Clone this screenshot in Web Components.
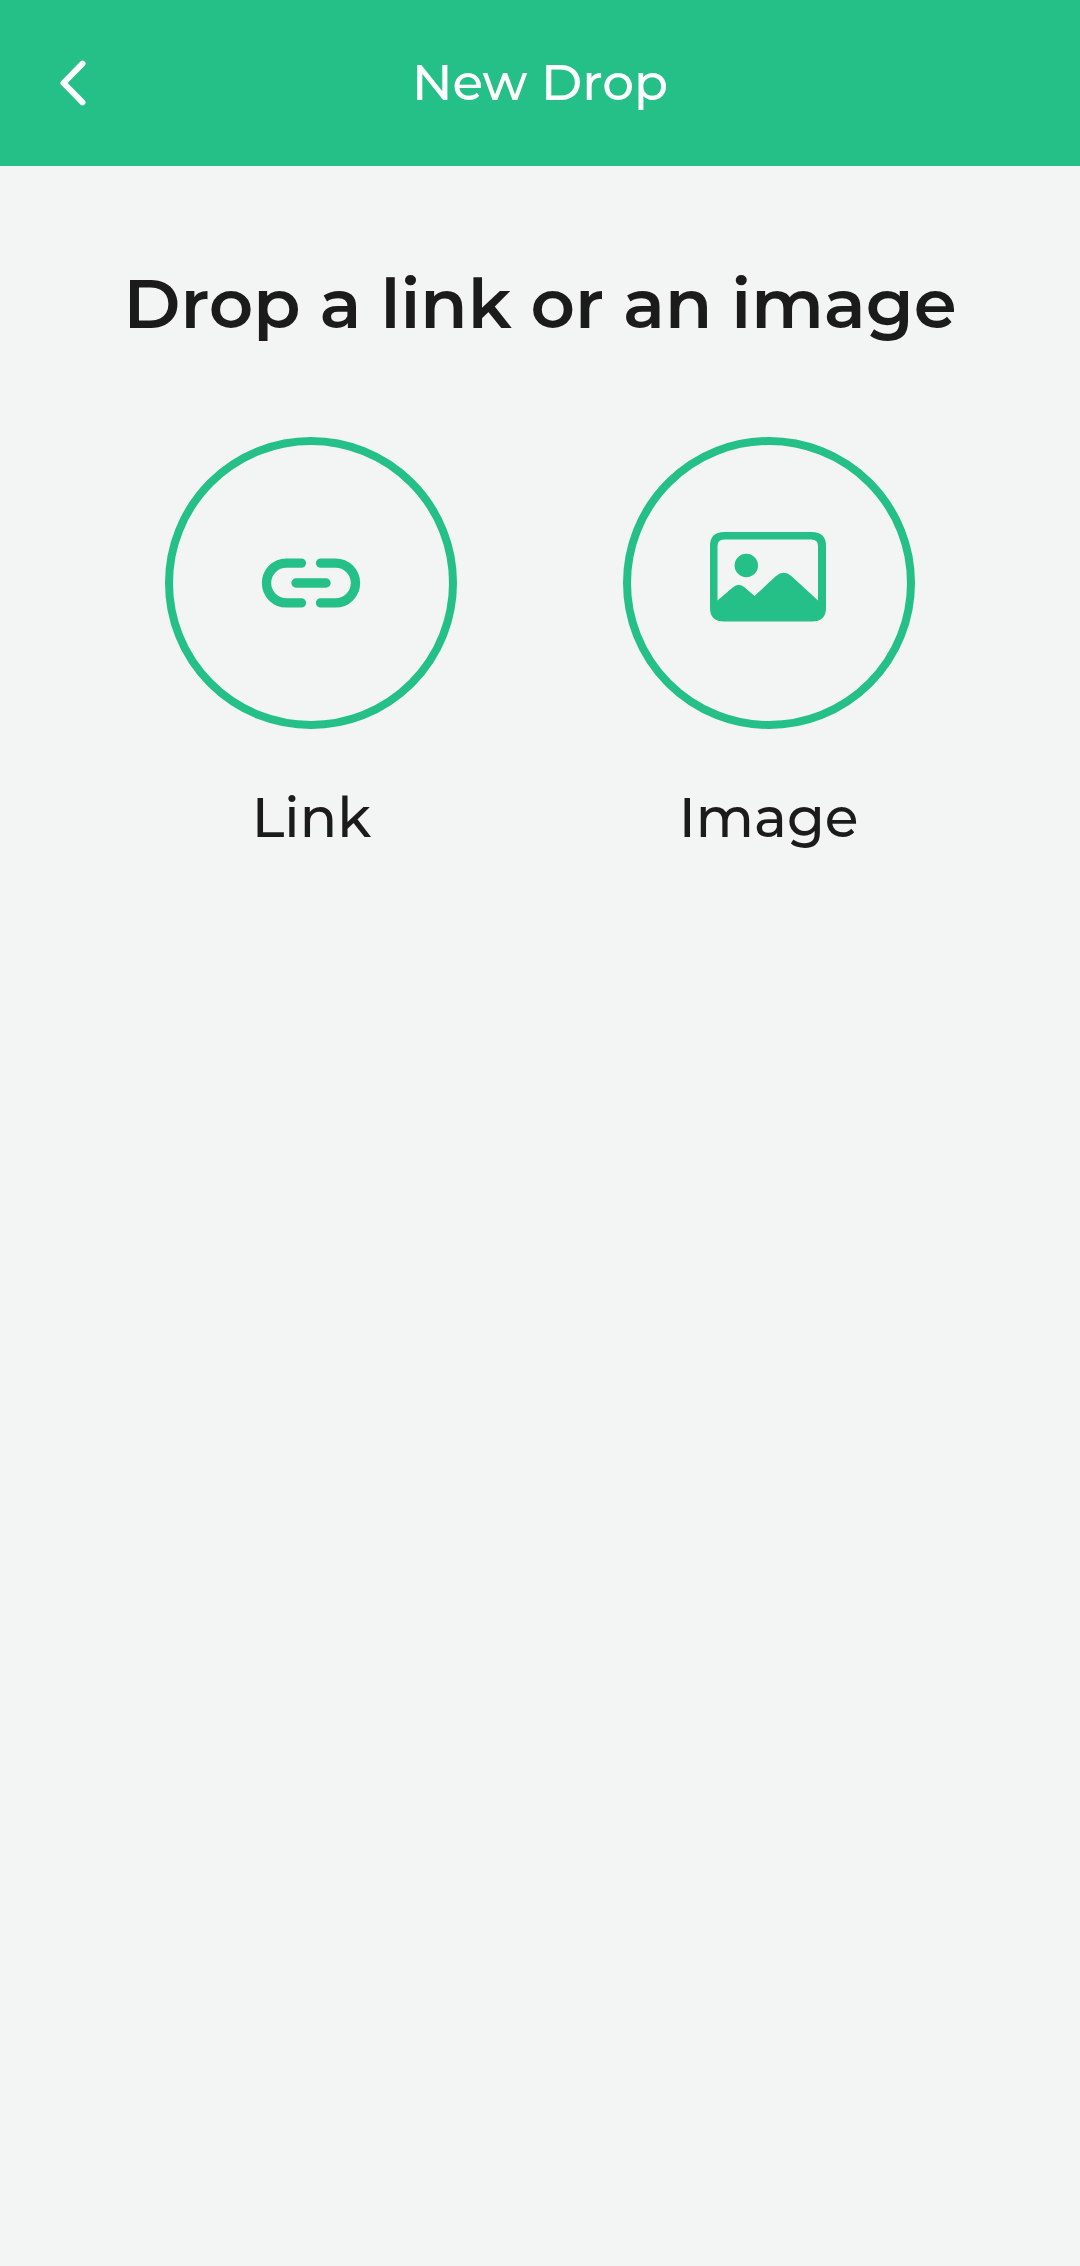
<!DOCTYPE html>
<html lang="en">
<head>
<meta charset="utf-8">
<meta name="viewport" content="width=device-width, initial-scale=1">
<title>New Drop</title>
<style>
  html { --green: #24c087; --ink: #1b1b1b; --paper: #f3f5f4; background: var(--paper); }
  body { margin: 0; color: var(--ink); font-family: Montserrat, Inter, sans-serif; }
</style>
</head>
<body>
<drop-page>
  <drop-header slot="header">New Drop</drop-header>
  <span slot="title">Drop a link or an image</span>
  <drop-option>
    <link-icon slot="icon"></link-icon>
    Link
  </drop-option>
  <drop-option>
    <image-icon slot="icon"></image-icon>
    Image
  </drop-option>
</drop-page>
<script>
  const define = (name, markup) => {
    const template = document.createElement('template');
    template.innerHTML = markup;
    customElements.define(name, class extends HTMLElement {
      constructor() {
        super();
        this.attachShadow({ mode: 'open' }).append(template.content.cloneNode(true));
      }
    });
  };

  define('drop-page', `
    <style>
      :host { display: flex; flex-direction: column; min-height: 100vh; background: var(--paper); }
      main { display: flex; flex-direction: column; gap: 88px; padding-top: 91px; }
      h1 { margin: 0; font-size: 69px; line-height: 92px; font-weight: 600; text-align: center; }
      .options { display: flex; justify-content: space-evenly; }
    </style>
    <slot name="header"></slot>
    <main>
      <h1><slot name="title"></slot></h1>
      <div class="options"><slot></slot></div>
    </main>`);

  define('drop-header', `
    <style>
      :host { display: block; background: var(--green); color: #fff; }
      header { display: grid; grid-template-columns: 1fr auto 1fr; align-items: center; height: 166px; padding: 0 48px; }
      button { display: flex; width: 48px; height: 72px; padding: 0; border: 0; background: none; color: inherit; align-items: center; justify-content: center; cursor: pointer; }
      h2 { margin: 0; font-size: 50px; line-height: 64px; font-weight: 500; }
    </style>
    <header>
      <button type="button" aria-label="Back">
        <svg width="48" height="48" viewBox="0 0 48 48" fill="none" stroke="currentColor" stroke-width="6" stroke-linecap="round" stroke-linejoin="round" aria-hidden="true"><path d="M34.5 4.7 15.500 24 34.500 43.300"/></svg>
      </button>
      <h2><slot></slot></h2>
    </header>`);

  define('drop-option', `
    <style>
      :host { display: block; }
      button { display: flex; flex-direction: column; align-items: center; gap: 53px; padding: 0; border: 0; background: none; color: inherit; font: inherit; font-size: 55px; line-height: 72px; font-weight: 500; cursor: pointer; }
      .ring { display: flex; align-items: center; justify-content: center; box-sizing: border-box; width: 292px; height: 292px; border: 8px solid var(--green); border-radius: 50%; color: var(--green); }
    </style>
    <button type="button">
      <span class="ring"><slot name="icon"></slot></span>
      <span><slot></slot></span>
    </button>`);

  define('link-icon', `
    <style>:host, svg { display: block; }</style>
    <svg width="118" height="118" viewBox="0 0 24 24" fill="none" stroke="currentColor" stroke-width="1.9" stroke-linecap="round" aria-hidden="true">
      <path d="M10.05 7.95H7a4.05 4.05 0 0 0 0 8.1h3.05M13.95 7.95H17a4.05 4.05 0 0 1 0 8.1h-3.05M8.95 12h6.1"/>
    </svg>`);

  define('image-icon', `
    <style>:host, svg { display: block; }</style>
    <svg width="118" height="118" viewBox="0 0 118 118" fill="currentColor" aria-hidden="true">
      <path fill-rule="evenodd" d="M14 8H102Q116 8 116 22V84Q116 97.500 102 97.500H14Q0 97.500 0 84V22Q0 8 14 8ZM14 15.500Q7.500 15.500 7.500 22V76.500L23 63.300Q28.700 58 34.500 63.300L44.500 72 66 52Q73.700 45.300 81.300 52L108 76.500V22Q108 15.500 101.500 15.500Z"/>
      <circle cx="36.300" cy="41.500" r="11.700"/>
    </svg>`);
</script>
</body>
</html>
